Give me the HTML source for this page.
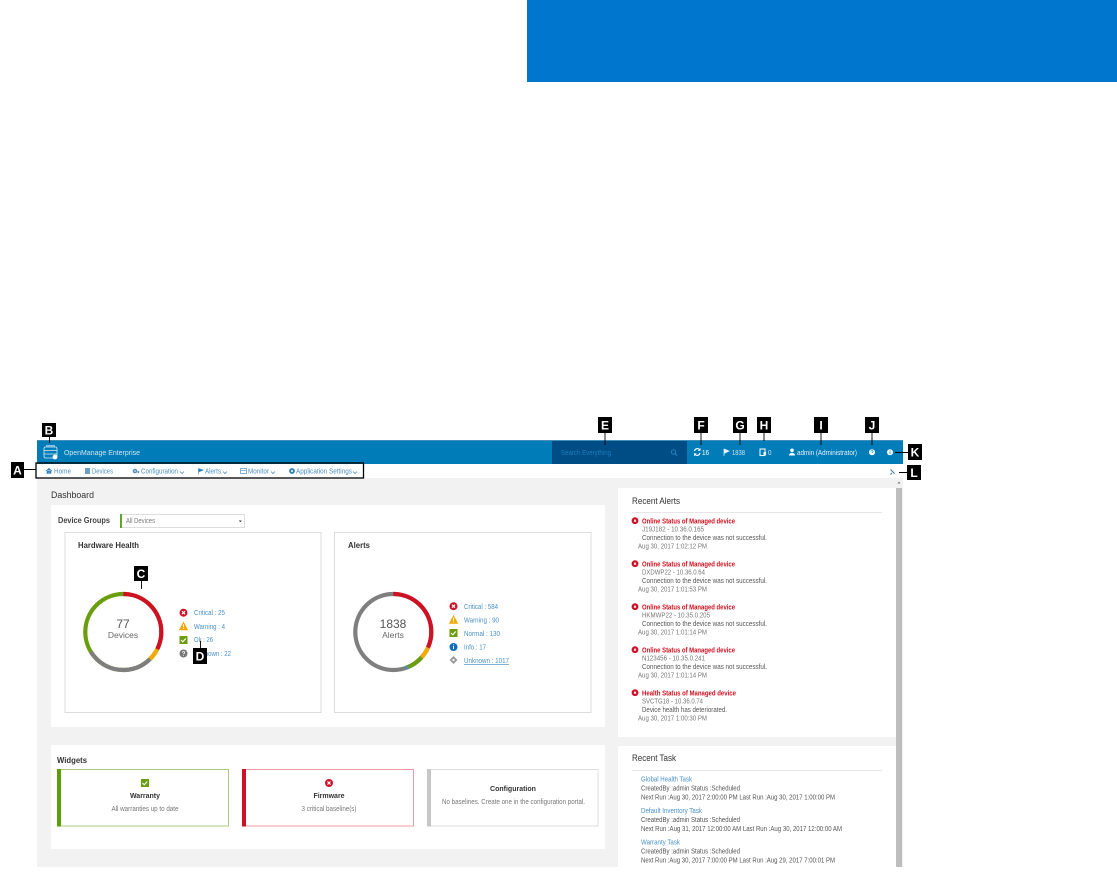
<!DOCTYPE html>
<html><head><meta charset="utf-8"><title>OpenManage Enterprise</title>
<style>
html,body{margin:0;padding:0;background:#fff;width:1117px;height:890px;overflow:hidden}
svg{display:block}
text{font-family:"Liberation Sans",sans-serif;font-size:7px;fill:#555}
.n{fill:#4b8fbe}
.h{fill:#cfe5f2}
.l{fill:#4a90c4}
.t{font-size:9px;fill:#333}
.r{font-weight:bold;fill:#d0101f}
.g{fill:#777}
.b{font-size:12px;font-weight:bold;fill:#fff;text-anchor:middle}
.w{font-weight:bold;fill:#333;text-anchor:middle}
.c{text-anchor:middle}
#soft{filter:blur(.35px)}
</style></head><body>
<svg width="1117" height="890" viewBox="0 0 1117 890" xmlns="http://www.w3.org/2000/svg">
<rect x="527" y="0" width="590" height="82" fill="#0076ce"/>
<g id="soft">
<!-- header -->
<rect x="37" y="440" width="866" height="24" fill="#007db8"/>
<rect x="37" y="440" width="866" height="1" fill="#3f8fb8"/>
<rect x="552" y="441" width="135" height="23" fill="#004d86"/>
<g fill="none" stroke="#d9ecf6" stroke-width=".8">
<rect x="44" y="447" width="13" height="11" rx="1.5"/>
<path d="M44 450.5h13M44 454h13M46 445.8h9"/>
</g>
<circle cx="55" cy="457" r="2.4" fill="#fff"/>
<text class="h" x="64" y="455" textLength="76" lengthAdjust="spacingAndGlyphs">OpenManage Enterprise</text>
<text x="561" y="455" textLength="50" lengthAdjust="spacingAndGlyphs" style="fill:#1c7cc0">Search Everything</text>
<circle cx="673.5" cy="452" r="2.2" fill="none" stroke="#2a85c4" stroke-width=".9"/><path d="M675 453.6l2 2" stroke="#2a85c4"/>
<path d="M694.5 451a2.9 2.9 0 0 1 5.2-1.2M699.9 453a2.9 2.9 0 0 1-5.2 1.2" fill="none" stroke="#fff" stroke-width="1.1"/>
<path d="M700.5 448v2.8h-2.8zM694 456.2v-2.8h2.8z" fill="#fff"/>
<text class="h" x="702" y="455" textLength="7" lengthAdjust="spacingAndGlyphs" style="fill:#fff">16</text>
<path d="M724 449v7M724 449l5 2-5 2.5z" fill="#e8f3f9" stroke="#e8f3f9" stroke-width=".7"/>
<text class="h" x="732" y="455" textLength="13" lengthAdjust="spacingAndGlyphs">1838</text>
<rect x="760" y="449" width="5" height="6.5" fill="none" stroke="#e8f3f9" stroke-width="1.1"/><rect x="763.5" y="452" width="2.6" height="3" fill="#e8f3f9"/>
<text class="h" x="768" y="455" textLength="3.5" lengthAdjust="spacingAndGlyphs">0</text>
<circle cx="792" cy="450.3" r="1.8" fill="#fff"/><path d="M789 455.5c0-3.5 6-3.5 6 0z" fill="#fff"/>
<text x="797" y="455" textLength="60" lengthAdjust="spacingAndGlyphs" style="fill:#e4f1f8">admin (Administrator)</text>
<circle cx="872" cy="452.3" r="3" fill="#fff"/><path d="M870.9 451.5c.2-1.3 2.2-1.3 2.2 0 0 .8-1.1.8-1.1 1.5" fill="none" stroke="#007db8" stroke-width=".6"/>
<circle cx="890" cy="452.3" r="3" fill="#fff"/><path d="M890 451.5v2.6M890 450.2v.7" stroke="#007db8" stroke-width=".8"/>

<!-- nav -->
<rect x="37" y="464" width="866" height="14" fill="#fff"/>
<path d="M46 471l3-2.6 3 2.6M47 470.5v3h1.5v-2h1v2h1.5v-3" fill="#2f7fb5" stroke="#2f7fb5" stroke-width=".6"/>
<text class="n" x="54" y="473.5" textLength="17" lengthAdjust="spacingAndGlyphs">Home</text>
<rect x="85" y="468" width="5" height="6" fill="#6d9fc4"/>
<text class="n" x="92" y="473.5" textLength="21" lengthAdjust="spacingAndGlyphs">Devices</text>
<circle cx="135" cy="471" r="2.3" fill="#4d8fb9"/><circle cx="135" cy="471" r=".8" fill="#fff"/><circle cx="138.4" cy="472" r="1" fill="#4d8fb9"/>
<text class="n" x="141" y="473.5" textLength="37" lengthAdjust="spacingAndGlyphs">Configuration</text>
<path d="M180 471.5l2 2 2-2" fill="none" stroke="#4b8fbe" stroke-width=".8"/>
<path d="M198.5 468.5v6M198.5 468.5l4.5 1.5-4.5 2z" fill="#2f7fb5" stroke="#2f7fb5" stroke-width=".6"/>
<text class="n" x="205" y="473.5" textLength="16" lengthAdjust="spacingAndGlyphs">Alerts</text>
<path d="M223 471.5l2 2 2-2" fill="none" stroke="#4b8fbe" stroke-width=".8"/>
<rect x="240.5" y="468.5" width="6" height="5" fill="none" stroke="#6d9fc4" stroke-width=".8"/><path d="M240.5 470.5h6" stroke="#6d9fc4" stroke-width=".7"/>
<text class="n" x="248" y="473.5" textLength="21" lengthAdjust="spacingAndGlyphs">Monitor</text>
<path d="M271 471.5l2 2 2-2" fill="none" stroke="#4b8fbe" stroke-width=".8"/>
<circle cx="292" cy="471" r="2.9" fill="#2f7fb5"/><circle cx="292" cy="471" r="1" fill="#fff"/>
<text class="n" x="296" y="473.5" textLength="56" lengthAdjust="spacingAndGlyphs">Application Settings</text>
<path d="M353 471.5l2 2 2-2" fill="none" stroke="#4b8fbe" stroke-width=".8"/>
<path d="M890.5 469.5l4 4M892 473l-1.5 1.5" stroke="#2f7fb5" stroke-width="1.1"/>

<!-- content -->
<rect x="37" y="478" width="866" height="389" fill="#f2f2f2"/>
<text class="t" x="51" y="498" textLength="43" lengthAdjust="spacingAndGlyphs">Dashboard</text>
<rect x="51" y="505" width="554" height="222" fill="#fff"/>
<text x="58" y="523" textLength="52" lengthAdjust="spacingAndGlyphs" style="font-size:8px;font-weight:bold;fill:#444">Device Groups</text>
<rect x="120.5" y="514.5" width="124" height="13" fill="#fff" stroke="#ddd"/>
<rect x="120" y="514" width="2" height="14" fill="#5ba829"/>
<text class="g" x="126" y="523" textLength="29" lengthAdjust="spacingAndGlyphs">All Devices</text>
<path d="M238.8 520.5h3l-1.5 1.7z" fill="#333"/>

<!-- hardware card -->
<rect x="65" y="532.5" width="256" height="180" fill="#fff" stroke="#ddd"/>
<text x="78" y="548" textLength="61" lengthAdjust="spacingAndGlyphs" style="font-size:8px;font-weight:bold;fill:#333">Hardware Health</text>
<g fill="none" stroke-width="4.2" transform="rotate(-90 123.3 632)">
<circle cx="123.3" cy="632" r="38" pathLength="77" stroke="#6a9e0f"/>
<circle cx="123.3" cy="632" r="38" pathLength="77" stroke="#cf1124" stroke-dasharray="25 52"/>
<circle cx="123.3" cy="632" r="38" pathLength="77" stroke="#f2a900" stroke-dasharray="4 73" stroke-dashoffset="-25"/>
<circle cx="123.3" cy="632" r="38" pathLength="77" stroke="#7f7f7f" stroke-dasharray="22 55" stroke-dashoffset="-29"/>
</g>
<text class="c" x="123" y="628" style="font-size:12px;fill:#555">77</text>
<text class="c" x="123" y="638" style="font-size:8.5px;fill:#666">Devices</text>
<circle cx="183.5" cy="612.7" r="4" fill="#ce1126"/><path d="M182 611.2l3 3M185 611.2l-3 3" stroke="#fff" stroke-width="1.2"/>
<path d="M183.5 621.5l4.7 8.7h-9.4z" fill="#f2a900"/><path d="M183.5 624v3.2M183.5 628v1" stroke="#fff" stroke-width=".9"/>
<rect x="179.5" y="636" width="8" height="8" fill="#6a9e0f"/><path d="M181 640l1.8 1.8 3-3.3" fill="none" stroke="#fff" stroke-width="1.1"/>
<circle cx="183.5" cy="653.5" r="4" fill="#777"/><path d="M182.3 652.6c.2-1.5 2.4-1.5 2.4 0 0 .9-1.2.9-1.2 1.7M183.5 655v.8" fill="none" stroke="#fff" stroke-width=".8"/>
<text class="l" x="194" y="615" textLength="31" lengthAdjust="spacingAndGlyphs">Critical : 25</text>
<text class="l" x="194" y="629" textLength="31" lengthAdjust="spacingAndGlyphs">Warning : 4</text>
<text class="l" x="194" y="642" textLength="19" lengthAdjust="spacingAndGlyphs">Ok : 26</text>
<text class="l" x="194" y="656" textLength="37" lengthAdjust="spacingAndGlyphs">Unknown : 22</text>

<!-- alerts card -->
<rect x="334.5" y="532.5" width="256.5" height="180" fill="#fff" stroke="#ddd"/>
<text x="348" y="548" textLength="22" lengthAdjust="spacingAndGlyphs" style="font-size:8px;font-weight:bold;fill:#333">Alerts</text>
<g fill="none" stroke-width="4.2" transform="rotate(-90 393.3 632)">
<circle cx="393.3" cy="632" r="38" pathLength="1838" stroke="#7f7f7f"/>
<circle cx="393.3" cy="632" r="38" pathLength="1838" stroke="#cf1124" stroke-dasharray="584 1254"/>
<circle cx="393.3" cy="632" r="38" pathLength="1838" stroke="#f2a900" stroke-dasharray="90 1748" stroke-dashoffset="-584"/>
<circle cx="393.3" cy="632" r="38" pathLength="1838" stroke="#6a9e0f" stroke-dasharray="130 1708" stroke-dashoffset="-674"/>
<circle cx="393.3" cy="632" r="38" pathLength="1838" stroke="#4a90c4" stroke-dasharray="17 1821" stroke-dashoffset="-804"/>
</g>
<text class="c" x="393" y="628" style="font-size:12px;fill:#555">1838</text>
<text class="c" x="393" y="638" style="font-size:8.5px;fill:#666">Alerts</text>
<circle cx="453.5" cy="606.2" r="4" fill="#ce1126"/><path d="M452 604.7l3 3M455 604.7l-3 3" stroke="#fff" stroke-width="1.2"/>
<path d="M453.5 615l4.7 8.7h-9.4z" fill="#f2a900"/><path d="M453.5 617.5v3.2M453.5 621.5v1" stroke="#fff" stroke-width=".9"/>
<rect x="449.5" y="629" width="8" height="8" fill="#6a9e0f"/><path d="M451 633l1.8 1.8 3-3.3" fill="none" stroke="#fff" stroke-width="1.1"/>
<circle cx="453.5" cy="647" r="4" fill="#0f6eb8"/><path d="M453.5 646v3M453.5 644.5v.8" stroke="#fff" stroke-width="1"/>
<path d="M453.5 656l4 4-4 4-4-4z" fill="#999"/><circle cx="453.5" cy="660" r="1.1" fill="#fff"/>
<text class="l" x="464" y="609" textLength="34" lengthAdjust="spacingAndGlyphs">Critical : 584</text>
<text class="l" x="464" y="622.5" textLength="35" lengthAdjust="spacingAndGlyphs">Warning : 90</text>
<text class="l" x="464" y="636" textLength="36" lengthAdjust="spacingAndGlyphs">Normal : 130</text>
<text class="l" x="464" y="649.5" textLength="22" lengthAdjust="spacingAndGlyphs">Info : 17</text>
<text class="l" x="464" y="663" textLength="45" lengthAdjust="spacingAndGlyphs" text-decoration="underline">Unknown : 1017</text>

<!-- widgets -->
<rect x="51" y="745" width="554" height="104" fill="#fff"/>
<text x="57" y="763" textLength="30" lengthAdjust="spacingAndGlyphs" style="font-size:8px;font-weight:bold;fill:#333">Widgets</text>
<rect x="57.5" y="769.5" width="171" height="56.5" fill="#fff" stroke="#a9cb80"/><rect x="57" y="769" width="4" height="57.5" fill="#5f9e0a"/>
<rect x="242.5" y="769.5" width="171" height="56.5" fill="#fff" stroke="#f09aa1"/><rect x="242" y="769" width="4" height="57.5" fill="#ce1126"/>
<rect x="427.5" y="769.5" width="170.5" height="56.5" fill="#fff" stroke="#ddd"/><rect x="427" y="769" width="4" height="57.5" fill="#c6c6c6"/>
<rect x="141" y="779" width="8" height="8" fill="#6a9e0f"/><path d="M142.5 783l1.8 1.8 3-3.3" fill="none" stroke="#fff" stroke-width="1.1"/>
<circle cx="329" cy="783" r="4" fill="#ce1126"/><path d="M327.5 781.5l3 3M330.5 781.5l-3 3" stroke="#fff" stroke-width="1.2"/>
<text class="w" x="145" y="798">Warranty</text>
<text class="w" x="329" y="798">Firmware</text>
<text class="w" x="513" y="791">Configuration</text>
<text class="c g" x="145" y="811" textLength="67" lengthAdjust="spacingAndGlyphs">All warranties up to date</text>
<text class="c g" x="329" y="811" textLength="55" lengthAdjust="spacingAndGlyphs">3 critical baseline(s)</text>
<text class="c g" x="513.5" y="804" textLength="143" lengthAdjust="spacingAndGlyphs">No baselines. Create one in the configuration portal.</text>

<!-- recent alerts -->
<rect x="618" y="488" width="278" height="249" fill="#fff"/>
<text class="t" x="632" y="504" textLength="48" lengthAdjust="spacingAndGlyphs">Recent Alerts</text>
<rect x="632" y="512" width="250" height="1" fill="#e6e6e6"/>
<g>
<circle cx="635" cy="520.7" r="3.4" fill="#ce1126"/><path d="M634 519.7l2 2M636 519.7l-2 2" stroke="#fff" stroke-width=".9"/>
<text class="r" x="642" y="523.5" textLength="93" lengthAdjust="spacingAndGlyphs">Online Status of Managed device</text>
<text class="g" x="642" y="531.5" textLength="62" lengthAdjust="spacingAndGlyphs">J19J182 - 10.36.0.165</text>
<text x="642" y="540" textLength="125" lengthAdjust="spacingAndGlyphs">Connection to the device was not successful.</text>
<text class="g" x="638" y="548.5" textLength="69" lengthAdjust="spacingAndGlyphs">Aug 30, 2017 1:02:12 PM</text>
</g>
<g>
<circle cx="635" cy="563.7" r="3.4" fill="#ce1126"/><path d="M634 562.7l2 2M636 562.7l-2 2" stroke="#fff" stroke-width=".9"/>
<text class="r" x="642" y="566.5" textLength="93" lengthAdjust="spacingAndGlyphs">Online Status of Managed device</text>
<text class="g" x="642" y="574.5" textLength="63" lengthAdjust="spacingAndGlyphs">DXDWP22 - 10.36.0.64</text>
<text x="642" y="583" textLength="125" lengthAdjust="spacingAndGlyphs">Connection to the device was not successful.</text>
<text class="g" x="638" y="591.5" textLength="69" lengthAdjust="spacingAndGlyphs">Aug 30, 2017 1:01:53 PM</text>
</g>
<g>
<circle cx="635" cy="606.7" r="3.4" fill="#ce1126"/><path d="M634 605.7l2 2M636 605.7l-2 2" stroke="#fff" stroke-width=".9"/>
<text class="r" x="642" y="609.5" textLength="93" lengthAdjust="spacingAndGlyphs">Online Status of Managed device</text>
<text class="g" x="642" y="617.5" textLength="68" lengthAdjust="spacingAndGlyphs">HKMWP22 - 10.35.0.205</text>
<text x="642" y="626" textLength="125" lengthAdjust="spacingAndGlyphs">Connection to the device was not successful.</text>
<text class="g" x="638" y="634.5" textLength="69" lengthAdjust="spacingAndGlyphs">Aug 30, 2017 1:01:14 PM</text>
</g>
<g>
<circle cx="635" cy="649.7" r="3.4" fill="#ce1126"/><path d="M634 648.7l2 2M636 648.7l-2 2" stroke="#fff" stroke-width=".9"/>
<text class="r" x="642" y="652.5" textLength="93" lengthAdjust="spacingAndGlyphs">Online Status of Managed device</text>
<text class="g" x="642" y="660.5" textLength="63" lengthAdjust="spacingAndGlyphs">N123456 - 10.35.0.241</text>
<text x="642" y="669" textLength="125" lengthAdjust="spacingAndGlyphs">Connection to the device was not successful.</text>
<text class="g" x="638" y="677.5" textLength="69" lengthAdjust="spacingAndGlyphs">Aug 30, 2017 1:01:14 PM</text>
</g>
<g>
<circle cx="635" cy="692.7" r="3.4" fill="#ce1126"/><path d="M634 691.7l2 2M636 691.7l-2 2" stroke="#fff" stroke-width=".9"/>
<text class="r" x="642" y="695.5" textLength="94" lengthAdjust="spacingAndGlyphs">Health Status of Managed device</text>
<text class="g" x="642" y="703.5" textLength="61" lengthAdjust="spacingAndGlyphs">SVCTG18 - 10.36.0.74</text>
<text x="642" y="712" textLength="85" lengthAdjust="spacingAndGlyphs">Device health has deteriorated.</text>
<text class="g" x="638" y="720.5" textLength="69" lengthAdjust="spacingAndGlyphs">Aug 30, 2017 1:00:30 PM</text>
</g>

<!-- recent task -->
<rect x="618" y="746" width="278" height="121" fill="#fff"/>
<text class="t" x="632" y="761" textLength="44" lengthAdjust="spacingAndGlyphs">Recent Task</text>
<rect x="632" y="770" width="250" height="1" fill="#e6e6e6"/>
<text class="l" x="641" y="781.5" textLength="51" lengthAdjust="spacingAndGlyphs">Global Health Task</text>
<text x="641" y="790.5" textLength="99" lengthAdjust="spacingAndGlyphs">CreatedBy :admin Status :Scheduled</text>
<text x="641" y="799.5" textLength="194" lengthAdjust="spacingAndGlyphs">Next Run :Aug 30, 2017 2:00:00 PM Last Run :Aug 30, 2017 1:00:00 PM</text>
<text class="l" x="641" y="813" textLength="61" lengthAdjust="spacingAndGlyphs">Default Inventory Task</text>
<text x="641" y="822" textLength="99" lengthAdjust="spacingAndGlyphs">CreatedBy :admin Status :Scheduled</text>
<text x="641" y="831" textLength="201" lengthAdjust="spacingAndGlyphs">Next Run :Aug 31, 2017 12:00:00 AM Last Run :Aug 30, 2017 12:00:00 AM</text>
<text class="l" x="641" y="844.5" textLength="39" lengthAdjust="spacingAndGlyphs">Warranty Task</text>
<text x="641" y="853.5" textLength="99" lengthAdjust="spacingAndGlyphs">CreatedBy :admin Status :Scheduled</text>
<text x="641" y="862.5" textLength="194" lengthAdjust="spacingAndGlyphs">Next Run :Aug 30, 2017 7:00:00 PM Last Run :Aug 29, 2017 7:00:01 PM</text>

<!-- scrollbar -->
<rect x="896" y="488" width="6" height="379" fill="#bdbdbd"/>
<path d="M899 481.5l1.5 2h-3z" fill="#777"/>

<!-- callouts -->
<g stroke="#000" fill="none">
<rect x="36" y="463" width="327.5" height="15" stroke-width="1.3"/>
<path d="M24 469.5h12M49.5 437v6M141.5 581v8M200.5 641v7M605 433v12M701 433v12M740 433v12M764 433v8M821 433v12M872 433v12M895 452.5h13M899 472.5h8" stroke-width=".9"/>
</g>
<g fill="#000">
<rect x="11" y="462" width="13" height="16"/><rect x="42" y="423" width="14" height="14"/>
<rect x="134" y="566" width="14" height="15"/><rect x="193" y="648" width="14" height="16"/>
<rect x="598" y="417" width="14" height="16"/><rect x="694" y="417" width="14" height="16"/>
<rect x="733" y="417" width="14" height="16"/><rect x="757" y="417" width="14" height="16"/>
<rect x="814" y="417" width="14" height="16"/><rect x="865" y="417" width="14" height="16"/>
<rect x="908" y="444" width="14" height="16"/><rect x="907" y="465" width="14" height="15"/>
</g>
<text class="b" x="17.5" y="474.5">A</text>
<text class="b" x="49" y="434.5">B</text>
<text class="b" x="141" y="578">C</text>
<text class="b" x="200" y="660.5">D</text>
<text class="b" x="605" y="429.5">E</text>
<text class="b" x="701" y="429.5">F</text>
<text class="b" x="740" y="429.5">G</text>
<text class="b" x="764" y="429.5">H</text>
<text class="b" x="821" y="429.5">I</text>
<text class="b" x="872" y="429.5">J</text>
<text class="b" x="915" y="456.5">K</text>
<text class="b" x="914" y="477">L</text>
</g>
</svg>
</body></html>
